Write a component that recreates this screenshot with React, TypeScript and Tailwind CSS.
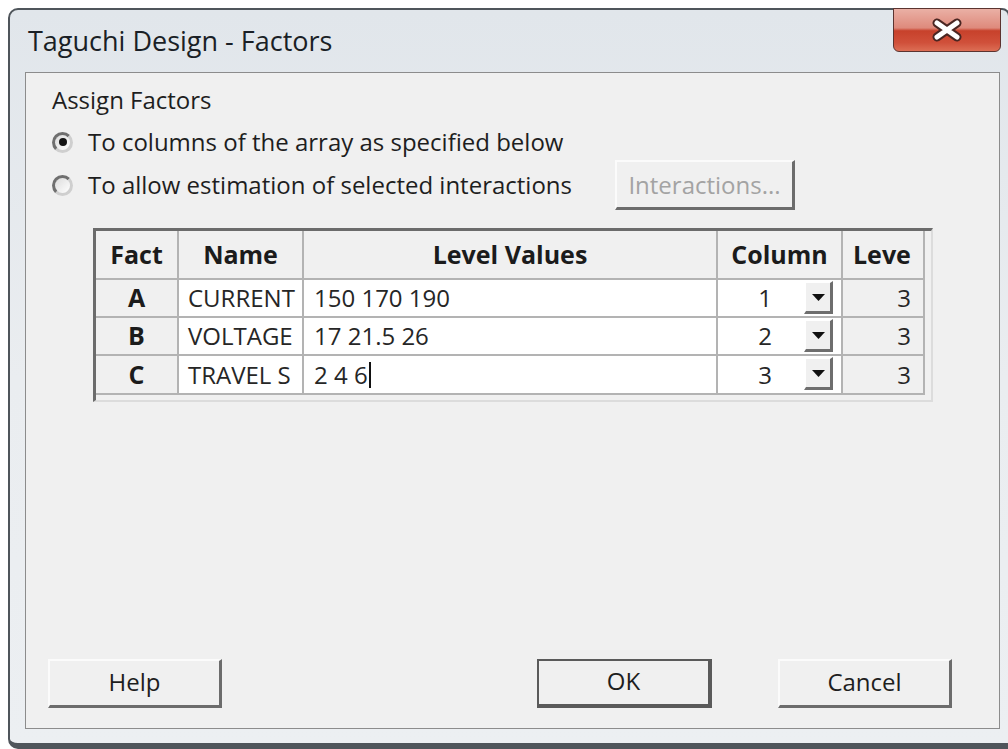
import React from "react";

const ui = "font-['Open_Sans',sans-serif]";

type Row = { key: string; name: string; values: string; col: string; levels: string; h: string; caret?: boolean };

const rows: Row[] = [
  { key: "A", name: "CURRENT", values: "150 170 190", col: "1", levels: "3", h: "h-[38px]" },
  { key: "B", name: "VOLTAGE", values: "17 21.5 26", col: "2", levels: "3", h: "h-[38px]" },
  { key: "C", name: "TRAVEL S", values: "2 4 6", col: "3", levels: "3", h: "h-[39px]", caret: true },
];

function Radio({ checked }: { checked?: boolean }) {
  return (
    <span className="flex h-[21px] w-[21px] shrink-0 items-center justify-center rounded-full border-[3px] border-t-[#6f6f6f] border-l-[#6f6f6f] border-r-[#cfcfcf] border-b-[#cfcfcf] bg-gradient-to-br from-[#dcdcdc] to-[#ffffff]">
      {checked && <span className="h-[8px] w-[8px] rounded-full bg-[#141414]" />}
    </span>
  );
}

function CloseGlyph() {
  return (
    <svg width="34" height="24" viewBox="0 0 34 24">
      <path d="M7 5 L27 19 M27 5 L7 19" stroke="#4a2622" strokeWidth="9" strokeLinecap="round" fill="none" />
      <path d="M7 5 L27 19 M27 5 L7 19" stroke="#ffffff" strokeWidth="5" strokeLinecap="round" fill="none" />
    </svg>
  );
}

function DropButton() {
  return (
    <div className="flex h-[33px] w-[29px] items-center justify-center border-t-2 border-l-2 border-t-white border-l-white border-r-[3px] border-b-[3px] border-r-[#6e6e6e] border-b-[#6e6e6e] bg-[#f0f0f0]">
      <svg width="13" height="7" viewBox="0 0 13 7">
        <path d="M0 0 H13 L6.5 7 Z" fill="#111111" />
      </svg>
    </div>
  );
}

function Button({ label, primary, className }: { label: string; primary?: boolean; className?: string }) {
  const edge = primary
    ? "border-t-2 border-l-2 border-t-[#5a5a5a] border-l-[#5a5a5a] border-r-[4px] border-b-[4px] border-r-[#5a5a5a] border-b-[#5a5a5a]"
    : "border-t-2 border-l-2 border-t-[#fbfbfb] border-l-[#fbfbfb] border-r-[3px] border-b-[3px] border-r-[#6c6c6c] border-b-[#6c6c6c]";
  return (
    <div
      className={`flex h-[49px] items-center justify-center bg-[#f0f0f0] pb-[3px] text-[24px] text-[#1e1e1e] ${edge} ${className ?? ""}`}
    >
      {label}
    </div>
  );
}

const cell = "border-r-2 border-b-2 border-[#b3b3b3]";

export default function App() {
  return (
    <div className={`h-[749px] w-[1008px] overflow-hidden bg-white pl-[8px] pt-[8px] ${ui}`}>
      <div className="flex h-[741px] w-[1002px] flex-col rounded-tl-[10px] rounded-tr-[8px] rounded-bl-[10px] border-2 border-b-[6px] border-[#4f555b] bg-gradient-to-b from-[#e1e6eb] via-[#eaedf0] to-[#eceff2]">
        {/* title bar */}
        <div className="flex h-[62px] shrink-0 items-start justify-between">
          <div className="flex h-[62px] items-center pl-[18px] text-[27px] text-[#1a1f26]">Taguchi Design - Factors</div>
          <div className="-mt-[2px] mr-[7px] flex h-[44px] w-[108px] items-center justify-center rounded-b-[6px] border border-[#5b3430] bg-[linear-gradient(to_bottom,#eab0a5_0%,#de8a7c_45%,#c7412b_52%,#d0503a_80%,#dc6e55_100%)]">
            <CloseGlyph />
          </div>
        </div>

        {/* client area */}
        <div className="mb-[14px] ml-[15px] mr-[8px] flex flex-1 flex-col border border-[#8c8c8c] bg-[#f0f0f0] text-[#1e1e1e]">
          <div className="ml-[26px] mt-[11px] flex h-[32px] items-center text-[24px]">Assign Factors</div>

          <div className="ml-[26px] mt-[10px] flex h-[32px] items-center text-[24px]">
            <Radio checked />
            <span className="ml-[15px]">To columns of the array as specified below</span>
          </div>

          <div className="ml-[26px] mt-[2px] flex h-[50px] items-center text-[24px]">
            <Radio />
            <span className="ml-[15px] w-[527px]">To allow estimation of selected interactions</span>
            <div className="flex h-[50px] w-[180px] items-center justify-center border-t-2 border-l-2 border-t-[#fbfbfb] border-l-[#fbfbfb] border-r-[3px] border-b-[3px] border-r-[#6c6c6c] border-b-[#6c6c6c] text-[24px] text-[#a3a3a3]">
              Interactions...
            </div>
          </div>

          {/* factor grid */}
          <div className="ml-[67px] mt-[18px] w-[840px] border-t-[3px] border-l-[3px] border-r-2 border-b-2 border-t-[#6b6b6b] border-l-[#6b6b6b] border-r-[#dcdcdc] border-b-[#dcdcdc] bg-[#f0f0f0] pb-[5px] pr-[6px]">
            <div className="grid grid-cols-[83px_125px_414px_125px_82px]">
              <div className={`${cell} flex h-[49px] items-center justify-center bg-[#f0f0f0] text-[25px] font-bold text-[#1b1b1b]`}>Fact</div>
              <div className={`${cell} flex h-[49px] items-center justify-center bg-[#f0f0f0] text-[25px] font-bold text-[#1b1b1b]`}>Name</div>
              <div className={`${cell} flex h-[49px] items-center justify-center bg-[#f0f0f0] text-[25px] font-bold text-[#1b1b1b]`}>Level Values</div>
              <div className={`${cell} flex h-[49px] items-center justify-center bg-[#f0f0f0] text-[25px] font-bold text-[#1b1b1b]`}>Column</div>
              <div className={`${cell} flex h-[49px] items-center overflow-hidden whitespace-nowrap bg-[#f0f0f0] pl-[10px] text-[25px] font-bold text-[#1b1b1b]`}>Leve</div>

              {rows.map((r) => (
                <React.Fragment key={r.key}>
                  <div className={`${cell} ${r.h} flex items-center justify-center bg-[#f0f0f0] text-[25px] font-bold text-[#1b1b1b]`}>{r.key}</div>
                  <div className={`${cell} ${r.h} flex items-center overflow-hidden whitespace-nowrap bg-white pl-[9px] text-[24px] text-[#262626]`}>{r.name}</div>
                  <div className={`${cell} ${r.h} flex items-center bg-white pl-[10px] text-[24px] text-[#262626]`}>
                    <span>{r.values}</span>
                    {r.caret && <span className="ml-[1px] h-[26px] w-[2px] bg-[#111111]" />}
                  </div>
                  <div className={`${cell} ${r.h} flex items-start justify-end bg-white pr-[8px] text-[24px] text-[#262626]`}>
                    <span className="mr-[32px] self-center">{r.col}</span>
                    <div className="mt-[1px]">
                      <DropButton />
                    </div>
                  </div>
                  <div className={`${cell} ${r.h} flex items-center justify-end bg-[#f0f0f0] pr-[12px] text-[24px] text-[#262626]`}>{r.levels}</div>
                </React.Fragment>
              ))}
            </div>
          </div>

          <div className="flex-1" />

          {/* dialog buttons */}
          <div className="mb-[20px] flex items-center pl-[22px] pr-[47px]">
            <Button label="Help" className="w-[174px]" />
            <div className="flex-1" />
            <Button label="OK" primary className="w-[175px]" />
            <Button label="Cancel" className="ml-[66px] w-[174px]" />
          </div>
        </div>
      </div>
    </div>
  );
}
